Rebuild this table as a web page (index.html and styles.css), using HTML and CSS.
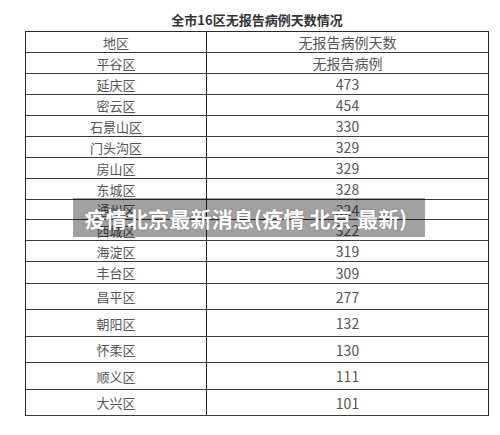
FILE: index.html
```html
<!DOCTYPE html>
<html lang="zh">
<head>
<meta charset="utf-8">
<link rel="stylesheet" href="styles.css">
</head>
<body>
<div class="page">
  <div class="title">全市16区无报告病例天数情况</div>
  <div class="table">
    <div class="row r21"><div class="c1">地区</div><div class="c2">无报告病例天数</div></div>
    <div class="row r21"><div class="c1">平谷区</div><div class="c2">无报告病例</div></div>
    <div class="row r21"><div class="c1">延庆区</div><div class="c2">473</div></div>
    <div class="row r21"><div class="c1">密云区</div><div class="c2">454</div></div>
    <div class="row r21"><div class="c1">石景山区</div><div class="c2">330</div></div>
    <div class="row r21"><div class="c1">门头沟区</div><div class="c2">329</div></div>
    <div class="row r21"><div class="c1">房山区</div><div class="c2">329</div></div>
    <div class="row r21"><div class="c1">东城区</div><div class="c2">328</div></div>
    <div class="row r20"><div class="c1">通州区</div><div class="c2">324</div></div>
    <div class="row r21"><div class="c1">西城区</div><div class="c2">322</div></div>
    <div class="row r21"><div class="c1">海淀区</div><div class="c2">319</div></div>
    <div class="row r22"><div class="c1">丰台区</div><div class="c2">309</div></div>
    <div class="row r26"><div class="c1">昌平区</div><div class="c2">277</div></div>
    <div class="row r27"><div class="c1">朝阳区</div><div class="c2">132</div></div>
    <div class="row r26"><div class="c1">怀柔区</div><div class="c2">130</div></div>
    <div class="row r27"><div class="c1">顺义区</div><div class="c2">111</div></div>
    <div class="row r26"><div class="c1">大兴区</div><div class="c2">101</div></div>
  </div>
  <div class="banner">疫情北京最新消息(疫情 北京 最新)</div>
</div>
</body>
</html>
```
FILE: styles.css
```css
html, body {
  margin: 0;
  padding: 0;
  background: #fff;
}
body {
  width: 500px;
  height: 435px;
  overflow: hidden;
  font-family: "Noto Sans CJK SC", "Noto Sans", sans-serif;
}
.page {
  position: relative;
  padding-left: 25px;
}
.title {
  width: 464px;
  height: 31px;
  box-sizing: border-box;
  padding-top: 11px;
  text-align: center;
  font-size: 13px;
  line-height: 17px;
  font-weight: bold;
  color: #333;
}
.table {
  width: 464px;
  box-sizing: border-box;
  border: 1px solid #2a2a2a;
  border-bottom: none;
  display: flex;
  flex-direction: column;
}
.row {
  display: flex;
  box-sizing: border-box;
  border-bottom: 1px solid #3a3a3a;
  color: #555;
  font-size: 13px;
}
.r20 { height: 20px; }
.r21 { height: 21px; }
.r22 { height: 22px; }
.r26 { height: 26px; }
.r27 { height: 27px; }
.c1, .c2 {
  display: flex;
  align-items: center;
  justify-content: center;
}
.c1 {
  width: 181px;
  box-sizing: border-box;
  border-right: 1px solid #222;
}
.c2 {
  flex: 1;
  font-size: 14px;
}
.banner {
  position: absolute;
  left: 73px;
  top: 198px;
  width: 352px;
  height: 39px;
  display: flex;
  align-items: center;
  justify-content: center;
  padding-right: 6px;
  box-sizing: border-box;
  background: rgba(0, 0, 0, 0.37);
  color: #fff;
  font-size: 21px;
  font-weight: bold;
  letter-spacing: 0.2px;
  text-shadow: 0 0 2px rgba(0, 0, 0, 0.3);
}
```
